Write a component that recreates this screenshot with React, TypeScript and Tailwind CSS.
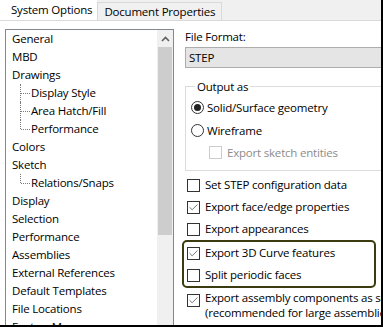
import { Check } from "lucide-react"

const tree = [
  { label: "General", level: 0 },
  { label: "MBD", level: 0 },
  { label: "Drawings", level: 0 },
  { label: "Display Style", level: 1 },
  { label: "Area Hatch/Fill", level: 1 },
  { label: "Performance", level: 1, last: true },
  { label: "Colors", level: 0 },
  { label: "Sketch", level: 0 },
  { label: "Relations/Snaps", level: 1, last: true },
  { label: "Display", level: 0 },
  { label: "Selection", level: 0 },
  { label: "Performance", level: 0 },
  { label: "Assemblies", level: 0 },
  { label: "External References", level: 0 },
  { label: "Default Templates", level: 0 },
  { label: "File Locations", level: 0 },
  { label: "FeatureManager", level: 0 },
]

function Box({ checked, disabled }: { checked?: boolean; disabled?: boolean }) {
  return (
    <span
      className={`flex h-[13px] w-[13px] shrink-0 items-center justify-center border bg-white ${
        disabled ? "border-[#cccccc]" : "border-[#333333]"
      }`}
    >
      {checked && <Check size={11} strokeWidth={1.6} className="text-[#444]" />}
    </span>
  )
}

function Radio({ on }: { on?: boolean }) {
  return (
    <span className="flex h-[13px] w-[13px] shrink-0 items-center justify-center rounded-full border border-[#333333] bg-white">
      {on && <span className="h-[7px] w-[7px] rounded-full bg-[#222]" />}
    </span>
  )
}

function Row({ label, checked }: { label: string; checked?: boolean }) {
  return (
    <div className="flex h-[22px] items-center gap-[5px]">
      <Box checked={checked} />
      <span>{label}</span>
    </div>
  )
}

export default function App() {
  return (
    <div
      className="h-[327px] w-[383px] overflow-hidden border-r-2 border-b-2 border-black bg-[#f0f0f0] text-[11.5px] tracking-[-0.2px] text-black"
      style={{ fontFamily: '"Open Sans", "Noto Sans", sans-serif' }}
    >
      {/* tabs */}
      <div className="flex h-[20px] items-end">
        <div className="flex h-[20px] items-center bg-white pl-[11px] pr-[5px]">System Options</div>
        <div className="flex h-[18px] items-center border border-b-0 border-[#d9d9d9] bg-[#f0f0f0] px-[6px]">
          Document Properties
        </div>
      </div>

      <div className="flex h-[305px] border-t border-[#d9d9d9] bg-white">
        {/* tree */}
        <div className="ml-[5px] mt-[8px] flex h-[320px] w-[169px] shrink-0 border border-[#828790] bg-white">
          <div className="flex-1">
            {tree.map((t, i) => (
              <div key={i} className="relative flex h-[18px] items-center whitespace-nowrap">
                {t.level === 1 && (
                  <>
                    <span
                      className={`absolute left-[14px] top-0 w-0 border-l border-dotted border-[#7a7a7a] ${
                        t.last ? "h-[9px]" : "h-[18px]"
                      }`}
                    />
                    <span className="absolute left-[15px] top-[9px] w-[9px] border-t border-dotted border-[#7a7a7a]" />
                  </>
                )}
                <span className={t.level === 1 ? "pl-[25px]" : "pl-[6px]"}>{t.label}</span>
              </div>
            ))}
          </div>
          <div className="flex w-[16px] flex-col bg-[#f0f0f0]">
            <div className="flex h-[17px] items-center justify-center">
              <svg width="9" height="6" viewBox="0 0 9 6">
                <path d="M1 5 L4.5 1.5 L8 5" fill="none" stroke="#606060" strokeWidth="1.6" />
              </svg>
            </div>
            <div className="mx-[1px] h-[188px] bg-[#cdcdcd]" />
          </div>
        </div>

        {/* right */}
        <div className="ml-[11px] flex min-w-0 flex-1 flex-col whitespace-nowrap">
          <div className="mt-[9px] leading-[14px]">File Format:</div>
          <div className="mt-[3px] flex h-[21px] items-center border border-r-0 border-[#adadad] bg-[#e5e5e5] pl-[3px]">
            STEP
          </div>

          <fieldset className="mt-[10px] h-[93px] border border-r-0 border-[#dcdcdc] pl-[5px] pt-0">
            <legend className="ml-[4px] px-[2px]">Output as</legend>
            <div className="mt-[1px] flex h-[23px] items-center gap-[3px]">
              <Radio on />
              <span>Solid/Surface geometry</span>
            </div>
            <div className="flex h-[23px] items-center gap-[3px]">
              <Radio />
              <span>Wireframe</span>
            </div>
            <div className="ml-[18px] flex h-[20px] items-center gap-[5px] text-[#8c8c8c]">
              <Box disabled />
              <span>Export sketch entities</span>
            </div>
          </fieldset>

          <div className="mt-[3px] pl-[2px]">
            <Row label="Set STEP configuration data" />
            <Row label="Export face/edge properties" checked />
            <Row label="Export appearances" />
            <div className="-ml-[5px] mr-[5px] rounded-[5px] border-2 border-[#3b3b10] pl-[3px]">
              <Row label="Export 3D Curve features" checked />
              <Row label="Split periodic faces" />
            </div>
            <div className="mt-[2px] flex gap-[5px]">
              <div className="pt-[4px]">
                <Box checked />
              </div>
              <div className="leading-[15px]">
                Export assembly components as separate files
                <br />
                (recommended for large assemblies)
              </div>
            </div>
          </div>
        </div>
      </div>
    </div>
  )
}
